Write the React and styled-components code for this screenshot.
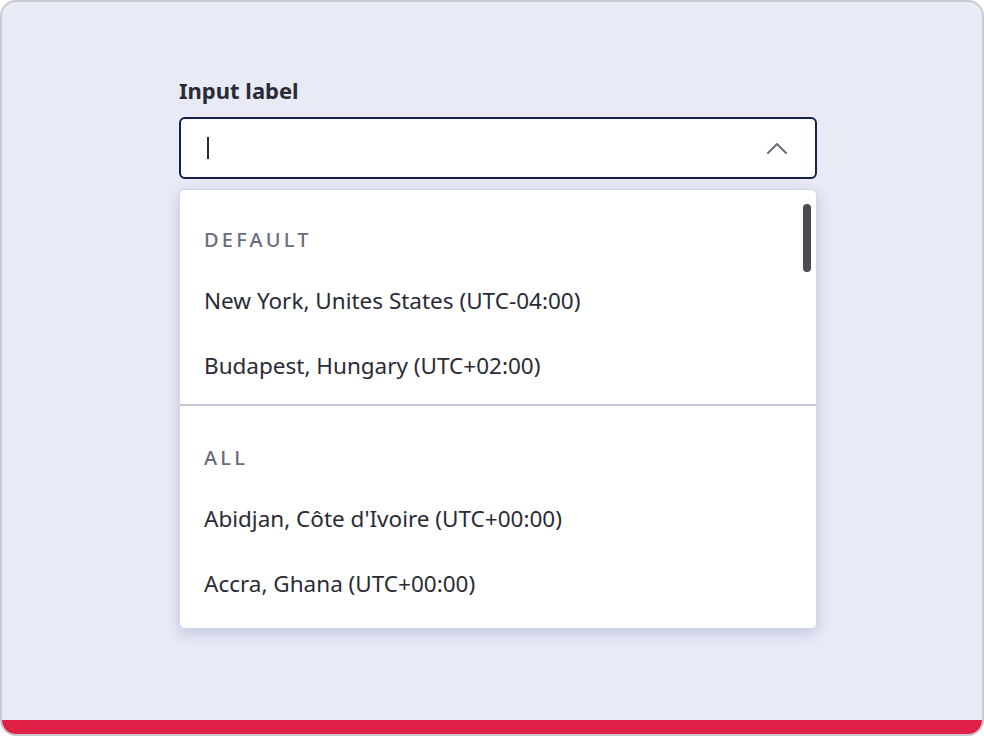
import React from "react"
import styled, { createGlobalStyle } from "styled-components"

const GlobalStyle = createGlobalStyle`
  html, body {
    margin: 0;
    padding: 0;
    background: #ffffff;
  }
  body {
    font-family: "Noto Sans", "Open Sans", sans-serif;
  }
`

const Frame = styled.div`
  box-sizing: border-box;
  width: 984px;
  height: 736px;
  border: 2px solid #c9cad1;
  border-radius: 16px;
  background: #e8eaf6;
  overflow: hidden;
  display: flex;
  flex-direction: column;
`

const Content = styled.div`
  flex: 1;
  padding: 73px 0 0 177px;
`

const Field = styled.div`
  width: 638px;
  display: flex;
  flex-direction: column;
`

const Label = styled.label`
  font-size: 22px;
  font-weight: 700;
  line-height: 30px;
  color: #2a2b35;
  margin-bottom: 12px;
`

const InputBox = styled.div`
  box-sizing: border-box;
  height: 62px;
  border: 2px solid #14214f;
  border-radius: 6px;
  background: #ffffff;
  display: flex;
  align-items: center;
  justify-content: space-between;
  padding: 0 26px 0 26px;
`

const Caret = styled.span`
  width: 2px;
  height: 22px;
  background: #2a2b35;
`

const Chevron = styled.svg`
  width: 24px;
  height: 14px;
  display: block;
`

const Menu = styled.div`
  box-sizing: border-box;
  position: relative;
  margin-top: 10px;
  height: 440px;
  border: 1px solid #d4d6e4;
  border-radius: 6px;
  background: #ffffff;
  box-shadow: 0 4px 14px rgba(90, 100, 160, 0.28);
  overflow: hidden;
`

const Scrollbar = styled.div`
  position: absolute;
  top: 14px;
  right: 5px;
  width: 8px;
  height: 68px;
  border-radius: 4px;
  background: #4b4b53;
`

const Group = styled.div`
  padding: ${p => (p.$last ? "2px 0 12px" : "0 0 6px")};
  border-bottom: ${p => (p.$last ? "none" : "2px solid #c6c8d8")};
`

const Heading = styled.div`
  padding: 30px 24px 0;
  line-height: 40px;
  margin-bottom: 8px;
  font-size: 20px;
  font-weight: 500;
  letter-spacing: 3.2px;
  text-transform: uppercase;
  color: #6b6c7c;
`

const Option = styled.div`
  height: 65px;
  display: flex;
  align-items: center;
  padding: 0 24px;
  font-size: 22.5px;
  color: #2a2b35;
`

const RedBar = styled.div`
  height: 14px;
  background: #e02046;
  flex-shrink: 0;
`

const groups = [
  {
    title: "Default",
    items: ["New York, Unites States (UTC-04:00)", "Budapest, Hungary (UTC+02:00)"],
  },
  {
    title: "All",
    items: ["Abidjan, Côte d'Ivoire (UTC+00:00)", "Accra, Ghana (UTC+00:00)"],
  },
]

export default function App() {
  return (
    <>
      <GlobalStyle />
      <Frame>
        <Content>
          <Field>
            <Label>Input label</Label>
            <InputBox>
              <Caret />
              <Chevron viewBox="0 0 24 14">
                <polyline
                  points="3,12 12,3 21,12"
                  fill="none"
                  stroke="#6b6c7c"
                  strokeWidth="2"
                  strokeLinecap="round"
                  strokeLinejoin="round"
                />
              </Chevron>
            </InputBox>
            <Menu>
              <Scrollbar />
              {groups.map((g, i) => (
                <Group key={g.title} $last={i === groups.length - 1}>
                  <Heading>{g.title}</Heading>
                  {g.items.map(item => (
                    <Option key={item}>{item}</Option>
                  ))}
                </Group>
              ))}
            </Menu>
          </Field>
        </Content>
        <RedBar />
      </Frame>
    </>
  )
}
